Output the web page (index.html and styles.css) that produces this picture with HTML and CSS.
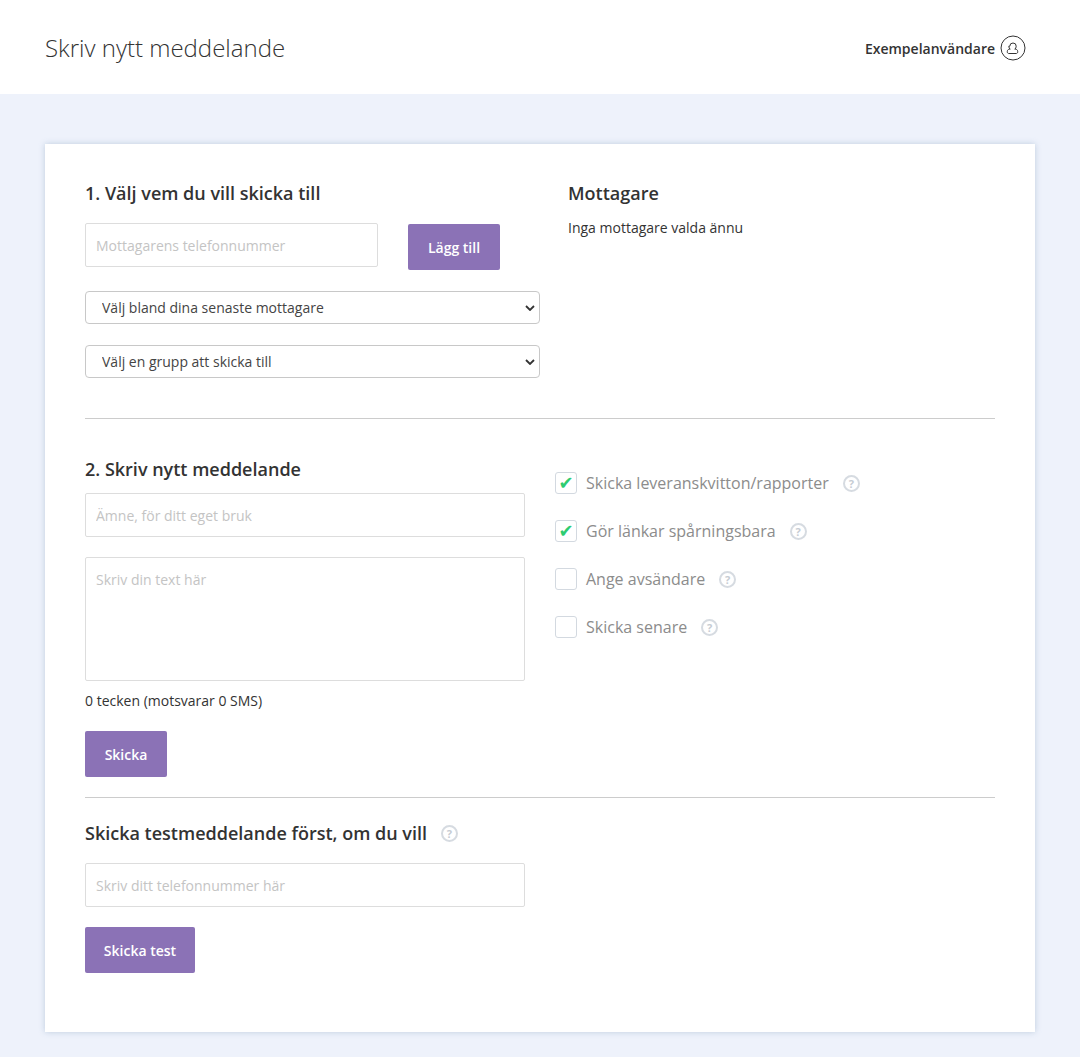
FILE: index.html
```html
<!DOCTYPE html>
<html lang="sv">
<head>
  <meta charset="UTF-8">
  <meta name="viewport" content="width=device-width, initial-scale=1.0">
  <title>Skriv nytt meddelande</title>
  <link rel="stylesheet" href="styles.css">
</head>
<body>
  <!-- Sidhuvud -->
  <div class="page-header">
    <h1>Skriv nytt meddelande</h1>
    <div class="user-menu">
      <span>Exempelanvändare</span>
      <svg class="user-icon" width="26" height="26" viewBox="0 0 26 26" fill="none" stroke="#333" stroke-width="1">
        <circle cx="13" cy="13" r="12"/>
        <path d="M9.8 11.2a3.2 3.2 0 1 1 6.4 0c0 1.4-.6 2.4-1.4 3h.7c1.3 0 2.2 1 2.2 2.2v.6c0 .9-.7 1.5-1.5 1.5h-7.4c-.8 0-1.5-.6-1.5-1.5v-.6c0-1.2.9-2.2 2.2-2.2h.7c-.8-.6-1.4-1.6-1.4-3z"/>
      </svg>
    </div>
  </div>

  <div class="card">
    <!-- Steg 1 -->
    <div class="recipients">
      <div>
        <h2>1. Välj vem du vill skicka till</h2>
        <div class="phone-row">
          <input class="text-input phone-input" type="text" placeholder="Mottagarens telefonnummer">
          <button class="btn add-btn">Lägg till</button>
        </div>
        <div class="select-wrap">
          <select><option>Välj bland dina senaste mottagare</option></select>
          <svg class="chevron" width="10" height="6" viewBox="0 0 10 6" fill="none" stroke="#333" stroke-width="1.8"><path d="M1 1l4 4 4-4"/></svg>
        </div>
        <div class="select-wrap">
          <select><option>Välj en grupp att skicka till</option></select>
          <svg class="chevron" width="10" height="6" viewBox="0 0 10 6" fill="none" stroke="#333" stroke-width="1.8"><path d="M1 1l4 4 4-4"/></svg>
        </div>
      </div>
      <div class="recipient-list">
        <h2>Mottagare</h2>
        <p>Inga mottagare valda ännu</p>
      </div>
    </div>

    <hr class="divider">

    <!-- Steg 2 -->
    <div class="message">
      <div>
        <h2 class="message-title">2. Skriv nytt meddelande</h2>
        <input class="text-input" type="text" placeholder="Ämne, för ditt eget bruk">
        <textarea class="text-input message-text" placeholder="Skriv din text här"></textarea>
        <p class="counter">0 tecken (motsvarar 0 SMS)</p>
        <button class="btn send-btn">Skicka</button>
      </div>
      <ul class="options">
        <li><span class="check">✔</span>Skicka leveranskvitton/rapporter<span class="help">?</span></li>
        <li><span class="check">✔</span>Gör länkar spårningsbara<span class="help">?</span></li>
        <li><span class="check"></span>Ange avsändare<span class="help">?</span></li>
        <li><span class="check"></span>Skicka senare<span class="help">?</span></li>
      </ul>
    </div>

    <hr class="divider divider-tight">

    <!-- Testmeddelande -->
    <div class="test-send">
      <h2 class="test-title">Skicka testmeddelande först, om du vill<span class="help">?</span></h2>
      <input class="text-input" type="text" placeholder="Skriv ditt telefonnummer här">
      <button class="btn test-btn">Skicka test</button>
    </div>
  </div>
</body>
</html>
```

FILE: styles.css
```css
* {
  margin: 0;
  padding: 0;
  box-sizing: border-box;
}

body {
  font-family: "Open Sans", "Liberation Sans", sans-serif;
  background-color: #eef2fb;
  color: #333;
  padding-bottom: 25px;
}

/* Sidhuvud */
.page-header {
  height: 94px;
  background-color: #fff;
  display: flex;
  justify-content: space-between;
  align-items: center;
  padding: 0 54px 0 45px;
}

.page-header h1 {
  font-size: 24px;
  font-weight: 300;
  color: #333;
}

.user-menu {
  display: flex;
  align-items: center;
  gap: 5px;
  font-size: 14px;
  font-weight: 600;
  margin-top: 2px;
}

.card {
  width: 990px;
  height: 888px;
  margin: 50px 0 0 45px;
  padding: 37px 40px 0;
  background-color: #fff;
  box-shadow: 0 0 6px rgba(130, 160, 190, 0.45);
}

h2 {
  font-size: 18px;
  font-weight: 600;
  line-height: 25px;
  color: #333;
}

.recipients {
  display: grid;
  grid-template-columns: 455px 1fr;
  column-gap: 28px;
}

.phone-row {
  display: flex;
  align-items: flex-start;
  gap: 30px;
  margin-top: 17px;
  margin-bottom: 21px;
}

.text-input {
  display: block;
  width: 440px;
  height: 44px;
  padding: 0 10px;
  border: 1px solid #ddd;
  border-radius: 2px;
  background: #fff;
  font-family: inherit;
  font-size: 14px;
  color: #333;
  outline: none;
}

.text-input::placeholder {
  color: #c4c4c4;
  opacity: 1;
}

.phone-input {
  width: 293px;
}

.btn {
  display: block;
  height: 46px;
  border: none;
  border-radius: 2px;
  background-color: #8b72b6;
  color: #fff;
  font-family: inherit;
  font-size: 14px;
  font-weight: 600;
  cursor: pointer;
}

.add-btn {
  width: 92px;
  margin-top: 1px;
}

.select-wrap {
  position: relative;
  margin-bottom: 21px;
}

.select-wrap:last-child {
  margin-bottom: 0;
}

.select-wrap select {
  display: block;
  width: 455px;
  height: 33px;
  padding: 0 16px;
  appearance: none;
  border: 1px solid #c8c8c8;
  border-radius: 4px;
  background: #fff;
  font-family: inherit;
  font-size: 14px;
  color: #444;
}

.chevron {
  position: absolute;
  right: 5px;
  top: 14px;
  pointer-events: none;
}

.recipient-list p {
  margin-top: 12px;
  font-size: 14px;
  line-height: 20px;
}

.divider {
  border: none;
  border-top: 1px solid #ccc;
  margin-top: 40px;
}

.divider-tight {
  margin-top: 20px;
}

.message {
  display: grid;
  grid-template-columns: 440px 1fr;
  column-gap: 30px;
  padding-top: 38px;
}

.message-title {
  margin-bottom: 11px;
}

.message-text {
  height: 124px;
  margin-top: 20px;
  padding-top: 12px;
  resize: none;
}

.counter {
  margin-top: 10px;
  font-size: 14px;
  line-height: 20px;
}

.send-btn {
  width: 82px;
  margin-top: 20px;
}

.options {
  list-style: none;
  padding-top: 15px;
}

.options li {
  display: flex;
  align-items: center;
  height: 22px;
  margin-bottom: 26px;
  font-size: 16px;
  color: #8c8c8c;
}

.check {
  width: 22px;
  height: 22px;
  margin-right: 9px;
  border: 1px solid #d3d9e0;
  border-radius: 3px;
  color: #2ecc71;
  font-family: "DejaVu Sans", sans-serif;
  font-size: 18px;
  line-height: 20px;
  text-align: center;
}

.help {
  display: inline-block;
  flex: none;
  width: 17px;
  height: 17px;
  margin-left: 14px;
  border: 2px solid #d6dbe1;
  border-radius: 50%;
  color: #c6ccd3;
  font-size: 11px;
  font-weight: 700;
  line-height: 13px;
  text-align: center;
}

.test-send {
  padding-top: 23px;
}

.test-title {
  display: flex;
  align-items: center;
  margin-bottom: 17px;
}

.test-btn {
  width: 110px;
  margin-top: 20px;
}
```
